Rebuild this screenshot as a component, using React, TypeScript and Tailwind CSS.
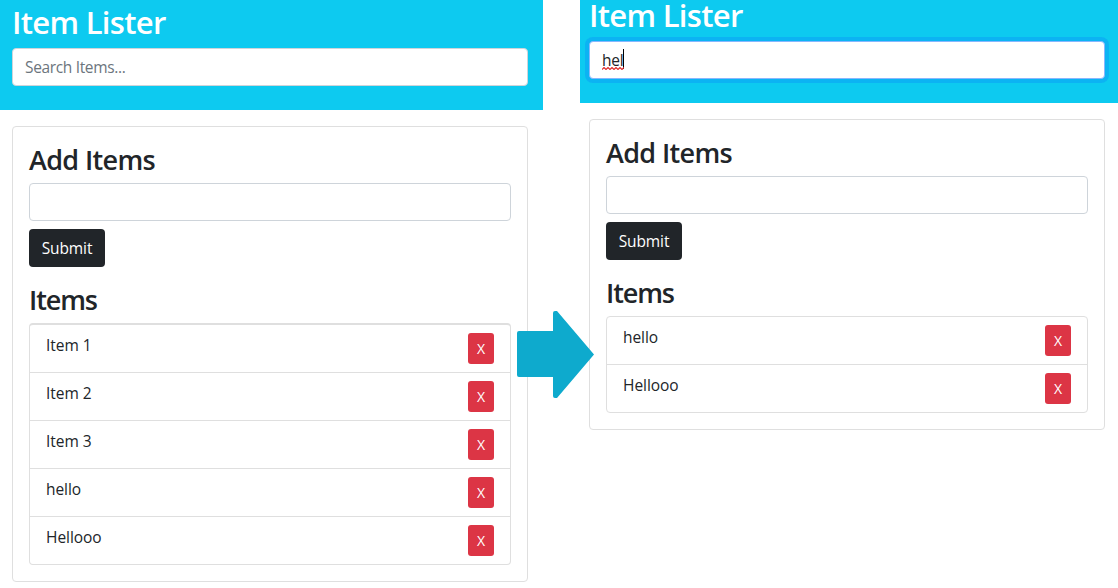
import React from "react";

type PanelProps = {
  items: string[];
  query?: string;
  shifted?: boolean;
};

function ItemRow({ name }: { name: string }) {
  return (
    <li className="flex h-[48px] items-start justify-between border-b border-[#dfdfdf] pt-[8px] pr-[16px] pl-[16px] last:border-b-0 last:h-[47px]">
      <span className="text-[15.5px] leading-[25px] tracking-[-0.05px]">{name}</span>
      <button className="flex h-[31px] w-[26px] items-center justify-center rounded-[3px] bg-[#dc3545] pt-[1px] text-[14px] leading-none text-white">
        X
      </button>
    </li>
  );
}

function Header({ query, shifted }: { query?: string; shifted?: boolean }) {
  return (
    <header
      className={
        shifted
          ? "h-[103px] bg-[#0dcaf0] pr-[13px] pl-[9px]"
          : "h-[110px] bg-[#0dcaf0] pr-[15px] pl-[12px]"
      }
    >
      <h1
        className={
          shifted
            ? "h-[41px] text-[31px] leading-[30px] font-semibold tracking-[-0.7px] text-white"
            : "h-[48px] pt-[7px] text-[31px] leading-[30px] font-semibold tracking-[-0.7px] text-white"
        }
      >
        Item Lister
      </h1>
      {query ? (
        <div className="flex h-[38px] items-center rounded-[4px] border border-[#86b7fe] bg-white px-[12px] text-[15.5px] tracking-[-0.2px] shadow-[0_0_0_4px_rgba(13,110,253,0.25)]">
          <span className="relative leading-[24px]">
            {query}
            <svg className="absolute top-[19px] left-0 h-[3px] w-[22px]" viewBox="0 0 22 3" fill="none">
              <path
                d="M0 2.5 2 .5 4 2.5 6 .5 8 2.5 10 .5 12 2.5 14 .5 16 2.5 18 .5 20 2.5 22 .5"
                stroke="#e03131"
                strokeWidth="1.2"
              />
            </svg>
          </span>
          <span className="mb-[2px] -ml-px h-[20px] w-px bg-black" />
        </div>
      ) : (
        <div className="flex h-[38px] items-center rounded-[4px] border border-[#ced4da] bg-white px-[12px] pt-[2px] text-[15.5px] tracking-[-0.35px] text-[#6c757d]">
          Search Items...
        </div>
      )}
    </header>
  );
}

function Panel({ items, query, shifted }: PanelProps) {
  return (
    <section className={shifted ? "w-[538px]" : "w-[543px]"}>
      <Header query={query} shifted={shifted} />
      <main
        className={
          shifted
            ? "mt-[16px] mr-[13px] ml-[9px] rounded-[4px] border border-[#dfdfdf] p-[16px]"
            : "mt-[16px] mr-[15px] ml-[12px] rounded-[4px] border border-[#dfdfdf] p-[16px]"
        }
      >
        <h2 className="h-[40px] text-[27px] leading-[33px] font-semibold tracking-[-0.65px]">Add Items</h2>
        <div className="h-[38px] rounded-[4px] border border-[#ced4da] bg-white" />
        <button className="mt-[8px] flex h-[38px] w-[76px] items-center justify-center rounded-[4px] bg-[#212529] pt-[2px] text-[15.5px] tracking-[-0.1px] text-white">
          Submit
        </button>
        <h2 className="mt-[16px] h-[40px] text-[27px] leading-[33px] font-semibold tracking-[-1.1px]">Items</h2>
        <ul
          className={
            shifted
              ? "rounded-[4px] border border-[#dfdfdf]"
              : "rounded-[4px] border border-t-2 border-[#dfdfdf]"
          }
        >
          {items.map((name) => (
            <ItemRow key={name} name={name} />
          ))}
        </ul>
      </main>
    </section>
  );
}

export default function App() {
  return (
    <div className="relative flex h-[588px] w-[1118px] items-start gap-[37px] overflow-hidden bg-white font-['Open_Sans',sans-serif] text-[#212529]">
      <Panel items={["Item 1", "Item 2", "Item 3", "hello", "Hellooo"]} />
      <Panel items={["hello", "Hellooo"]} query="hel" shifted />
      <svg className="absolute top-[310px] left-[516px] h-[90px] w-[80px]" viewBox="0 0 80 90">
        <path
          d="M3 21H37V3Q37 1 39 1H41L78 44.5 41 88H39Q37 88 37 86V67H3Q1 67 1 65V23Q1 21 3 21Z"
          fill="#0eaacd"
        />
      </svg>
    </div>
  );
}
